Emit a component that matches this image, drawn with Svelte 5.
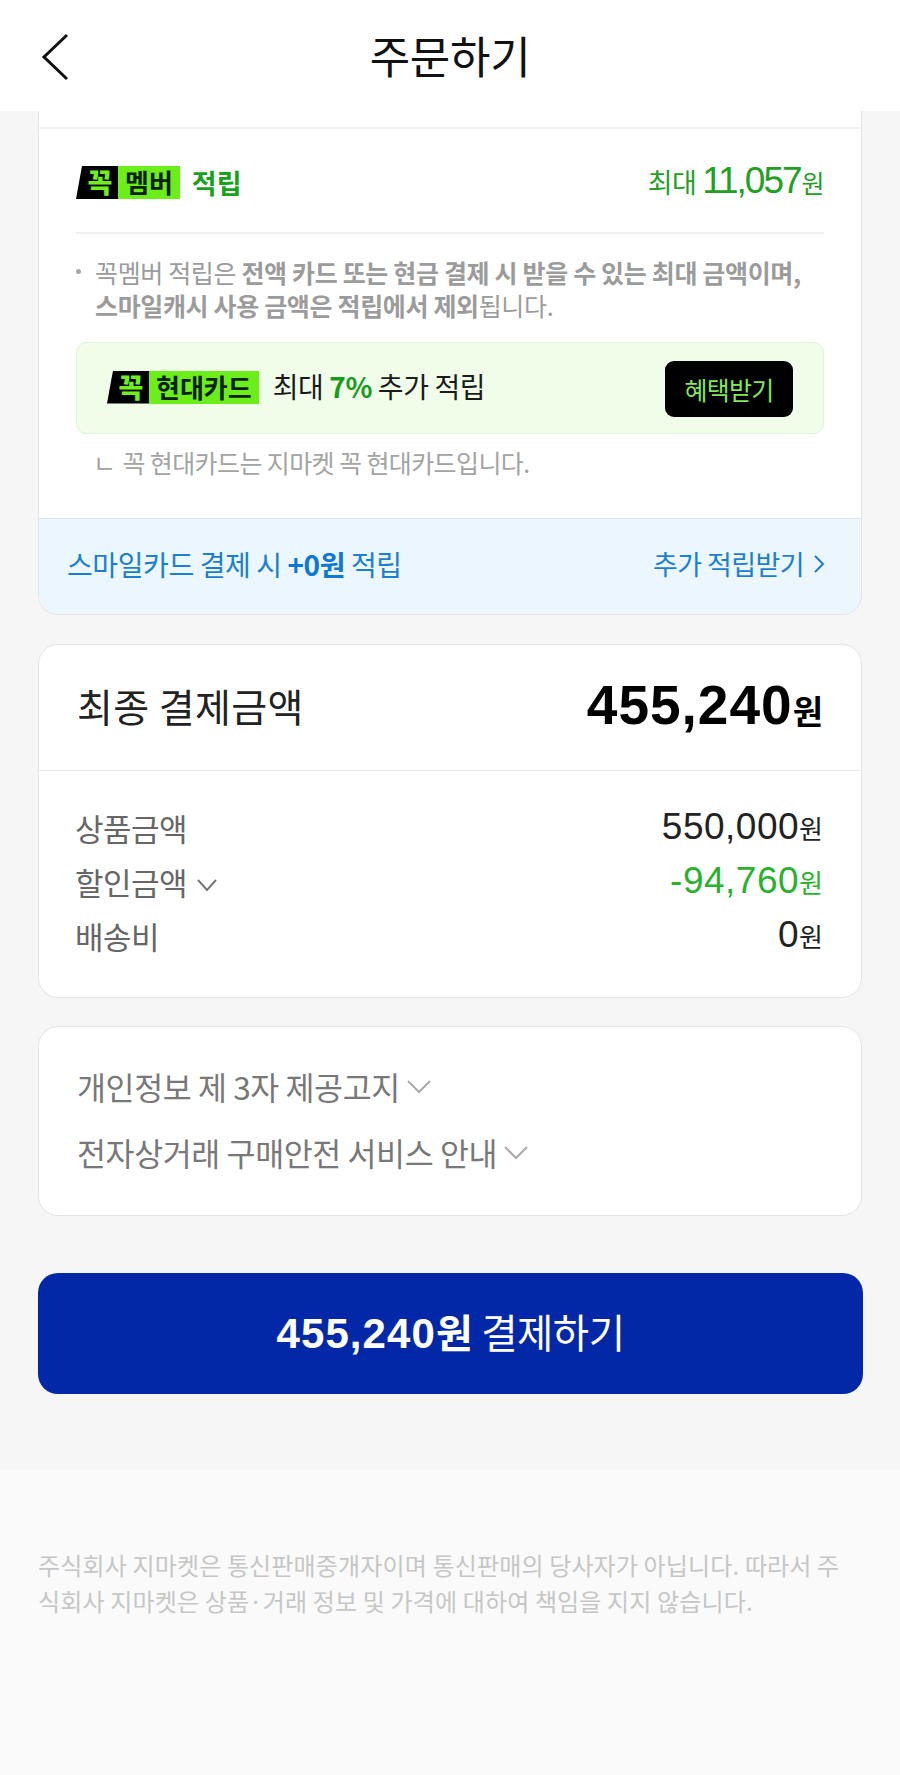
<script>
	const amounts = [
		{ label: '상품금액', value: '550,000' },
		{ label: '할인금액', value: '-94,760', discount: true },
		{ label: '배송비', value: '0' }
	];
	const notices = ['개인정보 제 3자 제공고지', '전자상거래 구매안전 서비스 안내'];
</script>

<div class="page">
	<header>
		<svg class="back" width="30" height="50" viewBox="0 0 30 50">
			<path d="M26 3 L3 25 L26 47" />
		</svg>
		<h1>주문하기</h1>
	</header>

	<main>
		<section class="card reward">
			<div class="top-line"></div>
			<div class="member">
				<div class="brand">
					<span class="kkok">꼭</span><span class="tag">멤버</span>
					<strong>적립</strong>
				</div>
				<div class="max">최대 <b>11,057</b><span>원</span></div>
			</div>
			<div class="notes">
				<p class="note">
					<i></i>
					<span>꼭멤버 적립은 <b>전액 카드 또는 현금 결제 시 받을 수 있는 최대 금액이며,<br />스마일캐시 사용 금액은 적립에서 제외</b>됩니다.</span>
				</p>
				<div class="promo">
					<div class="brand small">
						<span class="kkok">꼭</span><span class="tag">현대카드</span>
					</div>
					<div class="promo-text">최대 <b>7%</b> 추가 적립</div>
					<button>혜택받기</button>
				</div>
				<p class="sub"><span>ㄴ</span> 꼭 현대카드는 지마켓 꼭 현대카드입니다.</p>
			</div>
			<div class="smile">
				<div>스마일카드 결제 시 <b>+0원</b> 적립</div>
				<div class="more">
					추가 적립받기
					<svg width="12" height="20" viewBox="0 0 12 20"><path d="M2 2 L10 10 L2 18" /></svg>
				</div>
			</div>
		</section>

		<section class="card total">
			<div class="final">
				<span>최종 결제금액</span>
				<div class="price"><b>455,240</b><em>원</em></div>
			</div>
			<div class="rows">
				{#each amounts as row}
					<div class="row">
						<span class="label">
							{row.label}
							{#if row.discount}
								<svg width="24" height="14" viewBox="0 0 24 14"><path d="M3 2 L12 12 L21 2" /></svg>
							{/if}
						</span>
						<span class="value" class:discount={row.discount}>{row.value}<small>원</small></span>
					</div>
				{/each}
			</div>
		</section>

		<section class="card notices">
			{#each notices as item}
				<div class="notice">
					{item}
					<svg width="26" height="16" viewBox="0 0 26 16"><path d="M2 3 L13 14 L24 3" /></svg>
				</div>
			{/each}
		</section>

		<button class="pay"><b>455,240<span>원</span></b> 결제하기</button>
	</main>

	<footer>
		주식회사 지마켓은 통신판매중개자이며 통신판매의 당사자가 아닙니다. 따라서 주식회사 지마켓은 상품·거래 정보 및 가격에 대하여 책임을 지지 않습니다.
	</footer>
</div>

<style>
	:global(body) {
		margin: 0;
		background: #fafafa;
	}
	.page {
		width: 900px;
		height: 1775px;
		overflow: hidden;
		background: #fafafa;
		font-family: 'Noto Sans CJK KR', 'Noto Sans', sans-serif;
		color: #111;
	}
	header {
		position: relative;
		height: 111px;
		padding-bottom: 2px;
		box-sizing: border-box;
		display: flex;
		align-items: center;
		justify-content: center;
		background: #fff;
	}
	.back {
		position: absolute;
		left: 41px;
		top: 32px;
	}
	.back path {
		fill: none;
		stroke: #111;
		stroke-width: 3;
	}
	h1 {
		margin: 0;
		font-size: 44px;
		font-weight: 400;
		letter-spacing: -0.3px;
		color: #111;
	}
	main {
		height: 1358px;
		padding: 0 38px;
		box-sizing: border-box;
		background: #f6f6f6;
	}
	.card {
		box-sizing: border-box;
		background: #fff;
		border: 1px solid #e4e4e4;
		border-radius: 20px;
		overflow: hidden;
	}
	.reward {
		height: 504px;
		border-top: 0;
		border-radius: 0 0 20px 20px;
		display: flex;
		flex-direction: column;
	}
	.top-line {
		flex: none;
		height: 16px;
		border-bottom: 2px solid #f1f1f1;
	}
	.member {
		flex: none;
		height: 105px;
		margin: 0 37px;
		display: flex;
		align-items: center;
		justify-content: space-between;
		border-bottom: 2px solid #efefef;
		padding-top: 4px;
		box-sizing: border-box;
	}
	.brand {
		display: flex;
		align-items: center;
		height: 33px;
	}
	.kkok {
		width: 42px;
		height: 33px;
		padding-left: 6px;
		box-sizing: border-box;
		background: #000;
		color: #6ff01c;
		clip-path: polygon(6px 0, 100% 0, 100% 100%, 0 100%);
		font-size: 27px;
		font-weight: 900;
		line-height: 31px;
		text-align: center;
	}
	.tag {
		height: 33px;
		padding: 0 7px;
		background: #6bee1a;
		color: #0a1f05;
		font-size: 26px;
		font-weight: 700;
		line-height: 32px;
	}
	.brand strong {
		margin-left: 12px;
		color: #17a21c;
		font-size: 27px;
		font-weight: 700;
	}
	.max {
		margin-top: -4px;
		color: #22a024;
		font-size: 27px;
		letter-spacing: -0.6px;
		display: flex;
		align-items: baseline;
		gap: 6px;
	}
	.max b {
		font-family: 'Liberation Sans', Arial, sans-serif;
		font-size: 37px;
		font-weight: 400;
		letter-spacing: -2px;
	}
	.max span {
		margin-left: -5px;
		font-size: 25px;
	}
	.notes {
		flex: 1;
		padding: 0 37px;
	}
	.note {
		margin: 22px 0 0;
		display: flex;
		color: #9b9b9b;
		font-size: 25px;
		line-height: 33px;
		letter-spacing: -0.35px;
		white-space: nowrap;
	}
	.note i {
		flex: none;
		width: 5px;
		height: 5px;
		margin: 13px 14px 0 0;
		border-radius: 50%;
		background: #a8a8a8;
	}
	.note b {
		font-weight: 700;
	}
	.promo {
		height: 92px;
		margin-top: 20px;
		padding: 0 30px;
		display: flex;
		align-items: center;
		box-sizing: border-box;
		background: #f0fde9;
		border: 1px solid #e0f5d5;
		border-radius: 10px;
	}
	.brand.small {
		flex: none;
		margin-top: -2px;
	}
	.promo-text {
		margin-left: 14px;
		margin-top: -5px;
		font-size: 28px;
		letter-spacing: -0.4px;
		color: #1a1a1a;
	}
	.promo-text b {
		color: #189a1e;
		font-weight: 700;
	}
	.promo button {
		width: 128px;
		height: 56px;
		margin-left: auto;
		margin-top: 1px;
		border: 0;
		border-radius: 9px;
		background: #000;
		color: #80e85a;
		font-family: inherit;
		font-size: 25px;
		letter-spacing: -0.8px;
	}
	.sub {
		margin: 12px 0 0 17px;
		color: #a3a3a3;
		font-size: 25px;
		line-height: 33px;
		letter-spacing: -0.6px;
	}
	.sub span {
		margin-right: 2px;
	}
	.smile {
		flex: none;
		height: 96px;
		padding: 0 36px 6px 28px;
		box-sizing: border-box;
		display: flex;
		align-items: center;
		justify-content: space-between;
		background: #ebf6fe;
		border-top: 1px solid #d6e6f2;
		color: #1b7fd0;
		font-size: 28px;
		letter-spacing: -0.4px;
	}
	.smile b {
		font-weight: 700;
		color: #0f78d6;
	}
	.more {
		display: flex;
		align-items: center;
		gap: 9px;
		font-size: 27px;
		letter-spacing: -0.6px;
	}
	.more path {
		fill: none;
		stroke: #1b7fd0;
		stroke-width: 2;
	}
	.total {
		height: 354px;
		margin-top: 29px;
	}
	.final {
		height: 126px;
		padding: 0 38px 6px;
		box-sizing: border-box;
		display: flex;
		align-items: center;
		justify-content: space-between;
		border-bottom: 1px solid #e8e8e8;
		font-size: 39px;
		letter-spacing: 0.4px;
		color: #222;
	}
	.price {
		color: #000;
		display: flex;
		align-items: baseline;
	}
	.price b {
		font-family: 'Liberation Sans', Arial, sans-serif;
		font-size: 55px;
		font-weight: 700;
		letter-spacing: 1px;
	}
	.price em {
		font-style: normal;
		font-weight: 700;
		font-size: 33px;
		letter-spacing: 0;
	}
	.rows {
		padding: 29px 38px 0 36px;
	}
	.row {
		height: 54px;
		display: flex;
		align-items: center;
		justify-content: space-between;
		font-size: 31px;
		letter-spacing: -0.5px;
		color: #666;
	}
	.label path {
		fill: none;
		stroke: #777;
		stroke-width: 2;
	}
	.label svg {
		margin-left: 1px;
		vertical-align: 3px;
	}
	.value {
		color: #222;
		font-family: 'Liberation Sans', Arial, sans-serif;
		font-size: 37px;
		letter-spacing: 0.5px;
	}
	.value small {
		font-family: 'Noto Sans CJK KR', sans-serif;
		font-size: 26px;
		letter-spacing: 0;
	}
	.value.discount {
		color: #29b22d;
	}
	.notices {
		height: 190px;
		margin-top: 28px;
		padding: 26px 38px 0;
	}
	.notice {
		height: 66px;
		display: flex;
		align-items: center;
		gap: 6px;
		font-size: 31.5px;
		letter-spacing: -0.4px;
		color: #787878;
	}
	.notice path {
		fill: none;
		stroke: #aaa;
		stroke-width: 2;
	}
	.pay {
		display: block;
		width: 825px;
		height: 121px;
		margin-top: 57px;
		padding-bottom: 6px;
		border: 0;
		border-radius: 20px;
		background: #0228a8;
		color: #fff;
		font-family: inherit;
		font-size: 39.5px;
		letter-spacing: -0.5px;
	}
	.pay b {
		font-family: 'Liberation Sans', Arial, sans-serif;
		font-weight: 700;
		font-size: 42px;
		letter-spacing: 1.1px;
	}
	.pay b span {
		font-family: 'Noto Sans CJK KR', sans-serif;
		font-size: 40px;
		letter-spacing: 0;
	}
	footer {
		padding: 78px 50px 0 38px;
		color: #c6c6c6;
		font-size: 24px;
		line-height: 36px;
		letter-spacing: 0.15px;
		word-break: break-all;
	}
</style>
